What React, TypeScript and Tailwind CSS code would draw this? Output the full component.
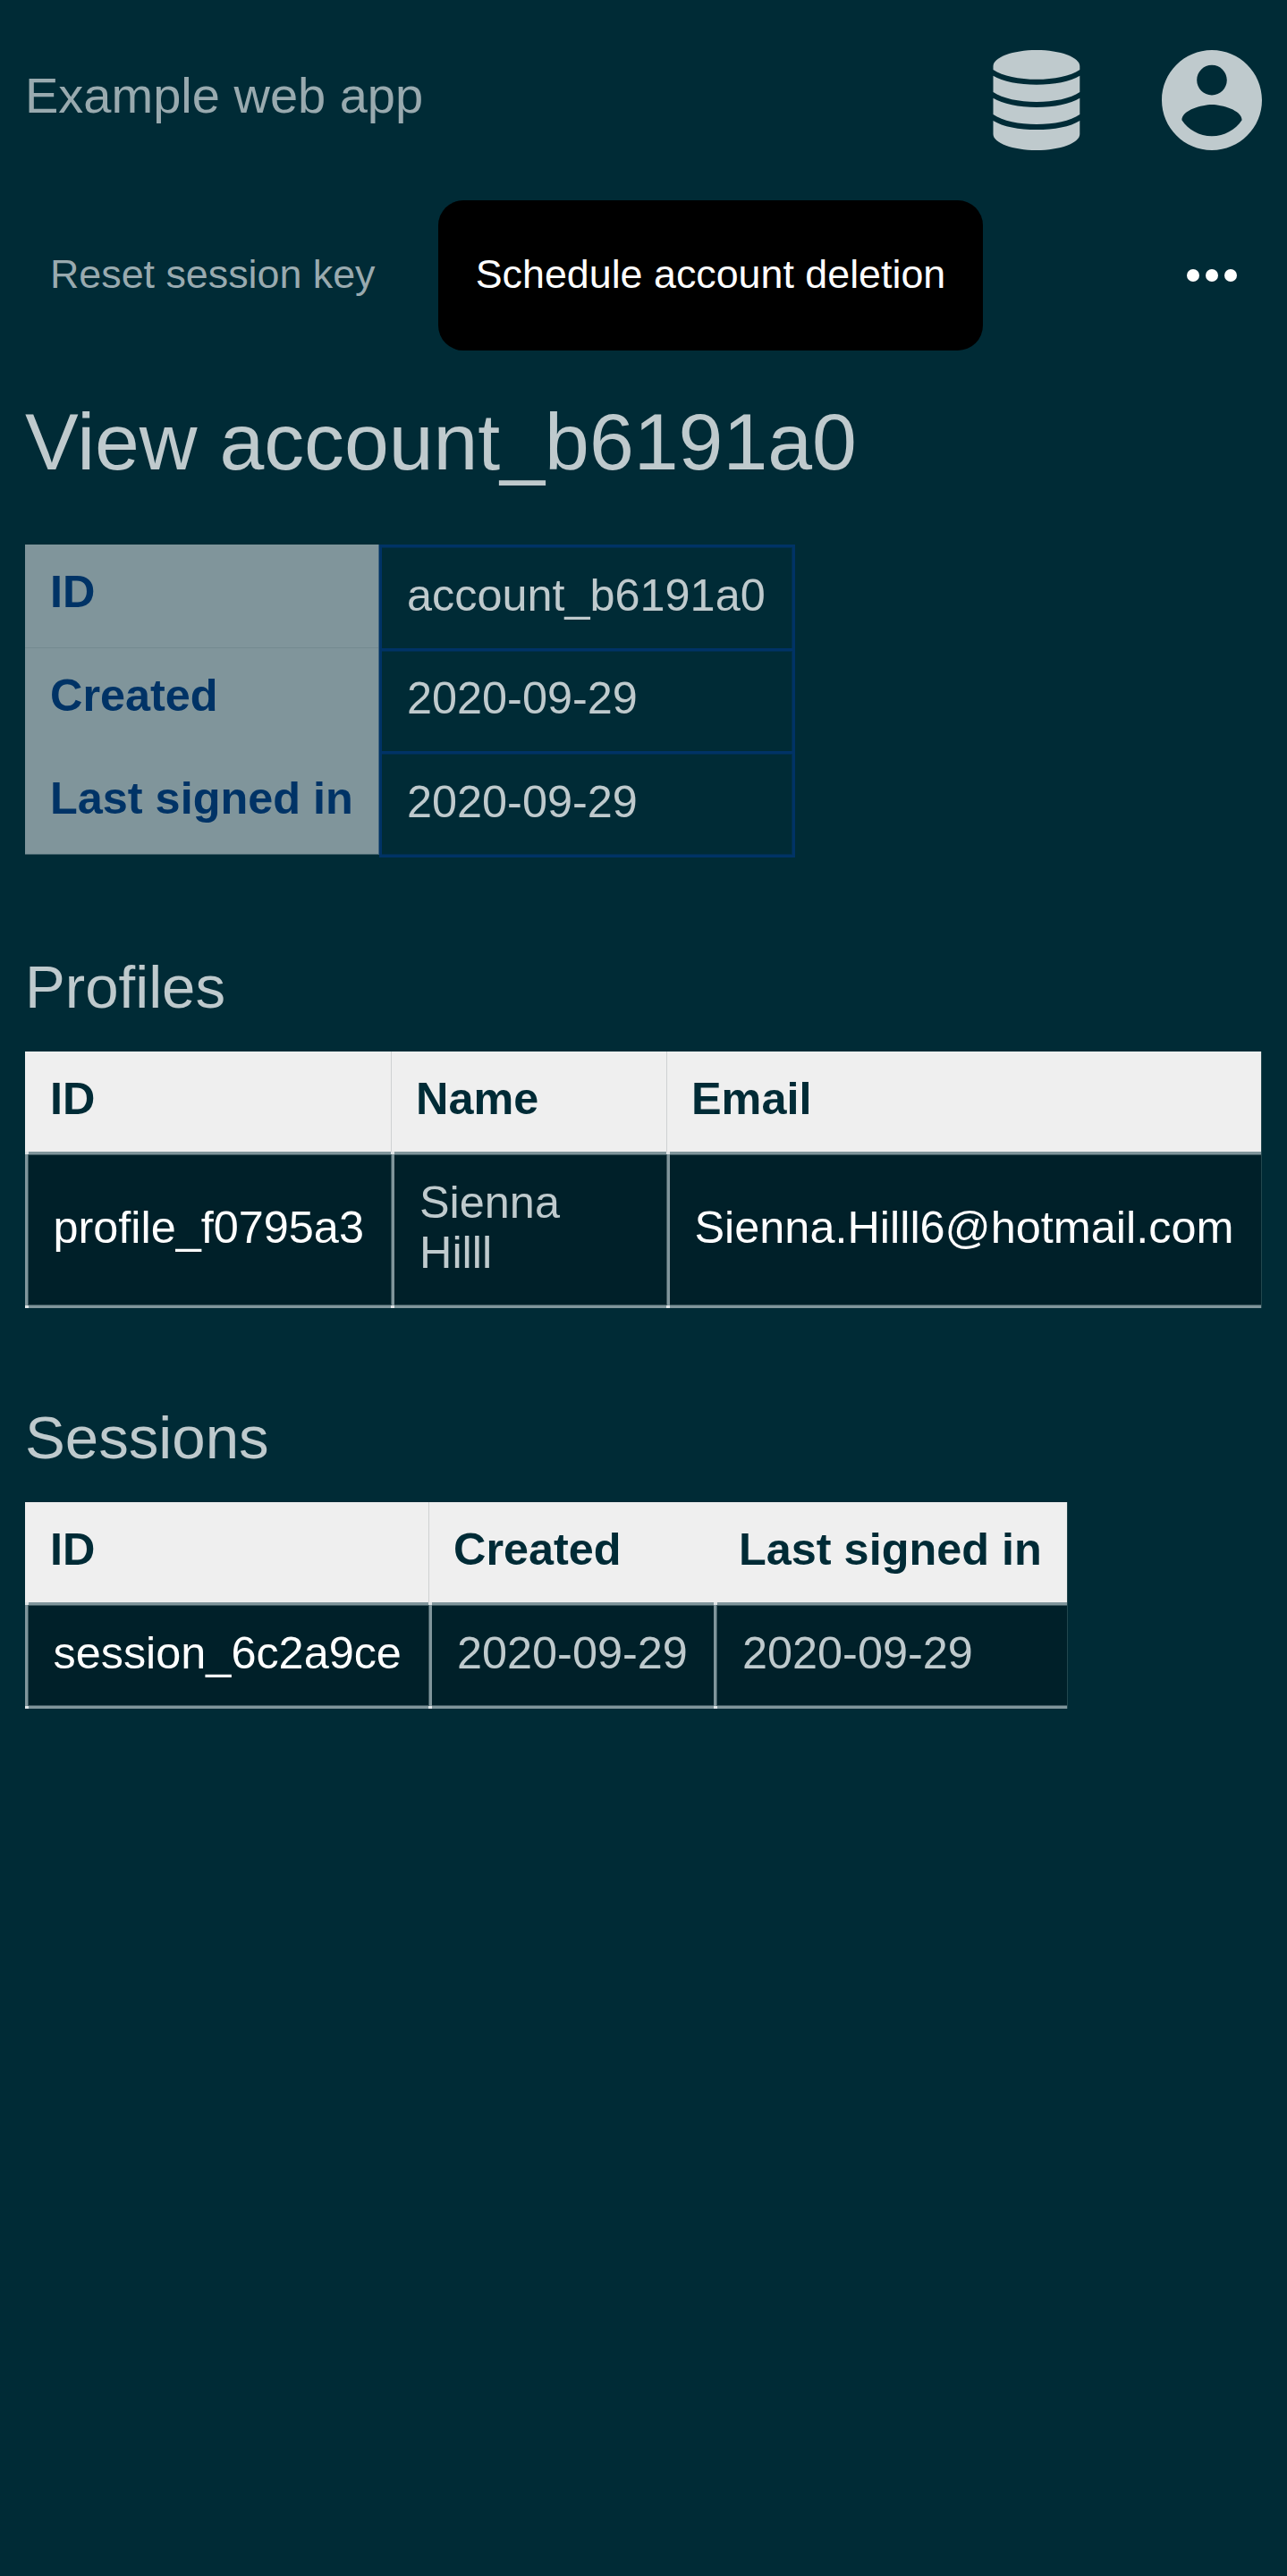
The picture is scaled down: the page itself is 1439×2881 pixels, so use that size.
import React from "react";

function DatabaseIcon() {
  return (
    <svg viewBox="0 0 112 112" className="size-28" fill="currentColor" aria-label="Database">
      <path d="M56 0C82.500 0 104.300 8 104.300 18V22C94 29.200 75.500 32.800 56 32.800S18 29.200 7.500 22V18C7.500 8 29.500 0 56 0Z" />
      <path d="M7.500 28.700C18 35.300 36.500 38.700 56 38.700S94 35.300 104.300 28.700V47C94 54.200 75.500 57.900 56 57.900S18 54.200 7.500 47Z" />
      <path d="M7.500 53.800C18 60.400 36.500 63.900 56 63.900S94 60.400 104.300 53.800V72C94 79.300 75.500 83 56 83S18 79.300 7.500 72Z" />
      <path d="M7.500 78.900C18 85.500 36.500 89.100 56 89.100S94 85.500 104.300 78.900V94C104.300 104 82.500 112 56 112S7.500 104 7.500 94Z" />
    </svg>
  );
}

function AccountIcon() {
  return (
    <svg viewBox="2 2 20 20" className="size-28" fill="currentColor" aria-label="Account">
      <path d="M12 2C6.480 2 2 6.480 2 12s4.480 10 10 10 10-4.480 10-10S17.520 2 12 2zm0 3c1.660 0 3 1.340 3 3s-1.340 3-3 3-3-1.340-3-3 1.340-3 3-3zm0 14.200c-2.500 0-4.710-1.280-6-3.220.030-1.990 4-3.080 6-3.080 1.990 0 5.970 1.090 6 3.080-1.290 1.940-3.500 3.220-6 3.220z" />
    </svg>
  );
}

type Column = {
  label: string;
  value: string;
  width: string;
  link?: boolean;
  divider?: boolean;
  softLeft?: boolean;
};

function DataTable({ columns, rowHeight }: { columns: Column[]; rowHeight: string }) {
  return (
    <div className="w-fit border-r border-[#22474e] text-[50.4px] leading-[56px]">
      <div className="flex h-28 bg-[#efefef] font-bold text-[#002b36]">
        {columns.map((col) => (
          <div
            key={col.label}
            className={`${col.width} border-l pt-[25px] pl-[27px] whitespace-nowrap ${col.divider ? "border-[#cfd1d2]" : "border-transparent"}`}
          >
            {col.label}
          </div>
        ))}
      </div>
      <div className={`flex ${rowHeight} bg-[#002029]`}>
        {columns.map((col) => (
          <div
            key={col.label}
            className={`${col.width} relative flex items-center border-y-3 border-[#80959b] pb-1.5 shadow-[inset_0_1px_0_#405b62,inset_0_-1px_0_#405b62] ${col.link ? "text-white" : "text-[#bfcacd]"}`}
          >
            <div
              className={`absolute -top-[3px] -bottom-[3px] left-0 w-1 border-y-3 border-y-[#dfe4e6] bg-[#80959b] ${col.softLeft ? "shadow-[inset_1px_0_0_#405b62]" : "shadow-[inset_-1px_0_0_#405b62]"}`}
            />
            <span className={col.link ? "pl-[31.500px] whitespace-nowrap" : "pr-7 pl-8"}>{col.value}</span>
          </div>
        ))}
      </div>
    </div>
  );
}

const details = [
  { label: "ID", value: "account_b6191a0", labelBox: "h-[115px]", valueBox: "h-[116px] pt-[26px]" },
  { label: "Created", value: "2020-09-29", labelBox: "h-[116px] border-t border-[#738a90]", valueBox: "h-[115px] pt-[25px]" },
  { label: "Last signed in", value: "2020-09-29", labelBox: "h-[115px]", valueBox: "h-[115px] pt-[26px]" },
];

const profileColumns: Column[] = [
  { label: "ID", value: "profile_f0795a3", width: "w-[409px]", link: true },
  { label: "Name", value: "Sienna Hilll", width: "w-[308px]", divider: true, softLeft: true },
  { label: "Email", value: "Sienna.Hilll6@hotmail.com", width: "w-[665px]", link: true, divider: true, softLeft: true },
];

const sessionColumns: Column[] = [
  { label: "ID", value: "session_6c2a9ce", width: "w-[451px]", link: true },
  { label: "Created", value: "2020-09-29", width: "w-[319px]", divider: true, softLeft: true },
  { label: "Last signed in", value: "2020-09-29", width: "w-[395px]" },
];

export default function App() {
  return (
    <div className="flow-root h-[2881px] w-[1439px] overflow-hidden bg-[#002b36] px-7 font-['Liberation_Sans',Arial,sans-serif] text-[#bfcacd]">
      <header className="flex h-56 items-center justify-between">
        <div className="pb-2.5 text-[56px] leading-[64px] text-[#99aaaf]">Example web app</div>
        <div className="flex gap-[84px]">
          <DatabaseIcon />
          <AccountIcon />
        </div>
      </header>

      <nav className="flex h-42 items-center text-[44.800px] leading-[52px]">
        <div className="w-[462px] pb-1 pl-7 whitespace-nowrap text-[#99aaaf]">Reset session key</div>
        <button className="h-42 w-[609px] rounded-[28px] bg-black pb-1 whitespace-nowrap text-white">Schedule account deletion</button>
        <svg viewBox="0 0 56 14" className="mr-7 ml-auto h-3.5 w-14" fill="white" aria-label="More">
          <circle cx="7" cy="7" r="7" />
          <circle cx="28" cy="7" r="7" />
          <circle cx="49" cy="7" r="7" />
        </svg>
      </nav>

      <h1 className="mt-[50px] h-[167px] text-[89.600px] leading-[104px]">View account_b6191a0</h1>

      <div className="flex h-[350px] text-[50.400px] leading-[56px]">
        <div className="h-[347px] w-[396px] border-r border-b border-r-[#406480] border-b-[#40606a] bg-[#80959b] font-bold text-[#003366]">
          {details.map((d) => (
            <div key={d.label} className={`${d.labelBox} pt-[25px] pl-7`}>{d.label}</div>
          ))}
        </div>
        <div className="w-[465px] border-x-3 border-b-3 border-[#003366]">
          {details.map((d) => (
            <div
              key={d.label}
              className={`${d.valueBox} border-t-3 border-[#003366] pl-[28px] shadow-[inset_0_1px_0_#002f4e,inset_-1px_0_0_#002f4e]`}
            >
              {d.value}
            </div>
          ))}
          <div className="h-px bg-[#002f4e]" />
        </div>
      </div>

      <h2 className="mt-[106px] h-[111px] text-[67.200px] leading-[78px]">Profiles</h2>
      <DataTable columns={profileColumns} rowHeight="h-[175px]" />

      <h2 className="mt-[106px] h-[111px] text-[67.200px] leading-[78px]">Sessions</h2>
      <DataTable columns={sessionColumns} rowHeight="h-[119px]" />
    </div>
  );
}
